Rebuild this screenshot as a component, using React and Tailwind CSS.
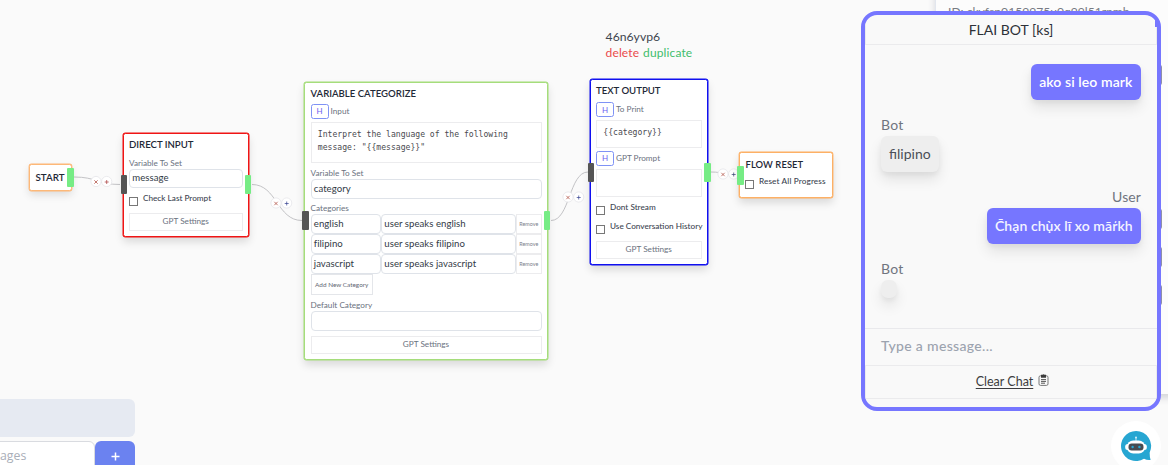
import React from 'react';

const Title = ({ children }) => (
  <div className="flex h-[21px] shrink-0 items-center pt-[2px] text-[9.6px] font-semibold text-[#1f2937]">{children}</div>
);

const Label = ({ children, className = 'h-4' }) => (
  <div className={`flex shrink-0 items-end text-[8.2px] leading-[12px] text-[#6b7280] ${className}`}>{children}</div>
);

const Field = ({ children, className = 'h-[19.5px]' }) => (
  <div className={`flex shrink-0 items-center rounded-[4px] border border-[#dfe3e9] bg-white px-[2.3px] text-[9.6px] leading-none tracking-[0.04px] text-[#323a46] ${className}`}>
    {children}
  </div>
);

const Prompt = ({ children, className }) => (
  <div className={`shrink-0 border border-[#ececee] bg-white px-[6.3px] pt-[5.5px] font-['DejaVu_Sans_Mono',monospace] text-[8.1px] leading-[12.6px] text-[#4a4a50] ${className}`}>
    {children}
  </div>
);

const HRow = ({ children, className = '' }) => (
  <div className={`flex h-[15px] shrink-0 items-center gap-[2px] text-[8.2px] text-[#6b7280] ${className}`}>
    <span className="flex h-[15px] w-[18px] items-center justify-center rounded-[2.5px] border border-[#7f92f5] bg-white text-[8px] text-[#6d5ff0]">H</span>
    {children}
  </div>
);

const Check = ({ children, className = '' }) => (
  <div className={`flex shrink-0 items-start gap-[5px] ${className}`}>
    <span className="mt-[3px] size-[9px] shrink-0 border border-[#777] bg-white" />
    <span className="whitespace-nowrap text-[8.2px] font-medium leading-[9px] text-[#3c4450]">{children}</span>
  </div>
);

const Settings = ({ className = '' }) => (
  <div className={`flex h-[17.5px] shrink-0 items-center justify-center border border-[#ececee] bg-white pb-[1px] text-[8.2px] text-[#6b7280] ${className}`}>
    GPT Settings
  </div>
);

const Node = ({ className, children }) => (
  <div className={`absolute flex flex-col rounded-[2.5px] border bg-white px-[5.5px] ${className}`}>{children}</div>
);

const Handle = ({ className }) => <div className={`absolute h-[19px] w-[6.5px] rounded-[1px] ${className}`} />;

const categories = [
  ['english', 'user speaks english'],
  ['filipino', 'user speaks filipino'],
  ['javascript', 'user speaks javascript'],
];

const edges = [
  { d: 'M74 177 C97 177 97 184.5 120 184.5', x: 96, y: 181.5, plus: '#a83a3a' },
  { d: 'M252 184.5 C277 184.5 277 220.5 302 220.5', x: 276, y: 203, plus: '#33418f' },
  { d: 'M551 220.5 C570 220.5 569 172 588 172', x: 568, y: 197, plus: '#33418f' },
  { d: 'M711 172 C724 172 724 175 737 175', x: 723, y: 174, plus: '#333f70' },
];

const Edges = () => (
  <svg className="absolute inset-0" width="1168" height="465" fill="none">
    {edges.map((e) => (
      <g key={e.d}>
        <path d={e.d} stroke="#c3c3c6" strokeWidth="1" />
        {[0, 10.7].map((o) => (
          <circle key={o} cx={e.x + o} cy={e.y} r="5.1" fill="#fff" stroke="#e6e6ea" strokeWidth=".8" />
        ))}
        <path d={`M${e.x - 1.7} ${e.y - 1.2}l3.4 3.4m0 -3.4l-3.4 3.4`} stroke="#b4584c" strokeWidth=".8" />
        <path d={`M${e.x + 8.7} ${e.y + 0.5}h4m-2 -2v4`} stroke={e.plus} strokeWidth=".7" />
      </g>
    ))}
  </svg>
);

const Canvas = () => (
  <>
    <Edges />
    <Node className="left-[29px] top-[164px] h-[26.5px] w-[42.5px] border-[#fdb878] shadow-[0_0_0_0.4px_#fdb878,0_4px_8px_rgba(0,0,0,0.12)]">
      <div className="flex h-full items-center text-[9.8px] font-semibold text-[#1f2937]">START</div>
    </Node>

    <Node className="left-[122.5px] top-[132.5px] h-[104.5px] w-[126.5px] border-[#f01414] shadow-[0_0_0_0.5px_#f01414,0_5px_9px_rgba(0,0,0,0.13)]">
      <Title>DIRECT INPUT</Title>
      <Label className="h-[14px]">Variable To Set</Label>
      <Field>message</Field>
      <Check className="mt-[5.5px] h-[13px]">Check Last Prompt</Check>
      <Settings className="mt-[6.5px]" />
    </Node>

    <Node className="left-[304px] top-[81.5px] h-[278px] w-[244px] border-[#a5dd7b] shadow-[0_0_0_0.5px_#a5dd7b,0_5px_9px_rgba(0,0,0,0.13)]">
      <Title>VARIABLE CATEGORIZE</Title>
      <HRow>Input</HRow>
      <Prompt className="mt-[3px] h-[41.5px]">
        Interpret the language of the following
        <br />
        message: "{'{{message}}'}"
      </Prompt>
      <Label className="h-[16px]">Variable To Set</Label>
      <Field>category</Field>
      <Label className="h-[15.5px] leading-[9px]">Categories</Label>
      {categories.map(([name, rule]) => (
        <div key={name} className="flex h-[20px] shrink-0">
          <Field className="h-[20px] w-[70.5px]">{name}</Field>
          <Field className="h-[20px] w-[135px]">{rule}</Field>
          <div className="flex h-[20px] flex-1 items-center justify-center border border-[#ececee] text-[5.4px] text-[#7b818c]">Remove</div>
        </div>
      ))}
      <div className="flex h-[21px] w-[62.5px] shrink-0 items-center justify-center border border-[#e4e6ea] text-[6.4px] text-[#5f6773]">
        Add New Category
      </div>
      <Label className="h-[16px] leading-[11px]">Default Category</Label>
      <Field />
      <Settings className="mt-[5.5px]" />
    </Node>

    <Node className="left-[589.5px] top-[79px] h-[186px] w-[118.5px] border-[#1010f0] shadow-[0_0_0_0.5px_#1010f0,0_5px_9px_rgba(0,0,0,0.13)]">
      <Title>TEXT OUTPUT</Title>
      <HRow className="mt-[1px]">To Print</HRow>
      <Prompt className="mt-[2.5px] h-[28px]">{'{{category}}'}</Prompt>
      <HRow className="mt-[3px]">GPT Prompt</HRow>
      <Prompt className="mt-[3px] h-[28px]" />
      <Check className="mt-[6px] h-[13px]">Dont Stream</Check>
      <Check className="mt-[6px] h-[13px]">Use Conversation History</Check>
      <Settings className="mt-[6.5px]" />
    </Node>

    <Node className="left-[739px] top-[152px] h-[46px] w-[94px] border-[#fdb065] shadow-[0_0_0_0.4px_#fdb065,0_5px_9px_rgba(0,0,0,0.13)]">
      <Title>
        <span className="pt-[1px] text-[9.4px] tracking-[0.1px]">FLOW RESET</span>
      </Title>
      <Check className="-ml-[0.6px] mt-[3px]">
        <span className="tracking-[0.14px]">Reset All Progress</span>
      </Check>
    </Node>

    <Handle className="left-[67px] top-[168px] bg-[#76ec85]" />
    <Handle className="left-[120.5px] top-[175px] bg-[#555]" />
    <Handle className="left-[244.5px] top-[175px] bg-[#76ec85]" />
    <Handle className="left-[302px] top-[211px] bg-[#555]" />
    <Handle className="left-[543.5px] top-[211px] bg-[#76ec85]" />
    <Handle className="left-[587.5px] top-[162.5px] bg-[#555]" />
    <Handle className="left-[704px] top-[162.5px] bg-[#76ec85]" />
    <Handle className="left-[737px] top-[165.5px] bg-[#76ec85]" />

    <div className="absolute left-[605.6px] top-[29px] text-[12.2px] leading-4 text-[#3f4650]">
      <div>46n6yvp6</div>
      <div className="flex gap-[4px] text-[12px] tracking-[0.12px]">
        <span className="text-[#ea4a4a]">delete</span>
        <span className="text-[#41bd6c]">duplicate</span>
      </div>
    </div>
  </>
);

const bubbleShadow = 'shadow-[0_8px_14px_rgba(0,0,0,0.09),0_3px_5px_rgba(0,0,0,0.05)]';

const Chat = () => (
  <div className="absolute left-[861px] top-[11px] flex h-[400px] w-[300px] flex-col overflow-hidden rounded-[16px] border-4 border-[#7676ff] bg-[#f9f9f9] text-[14px]">
    <div className="flex h-[30px] shrink-0 items-center justify-center border border-t-0 border-[#ebebed] pb-[1px] text-[#2d3138]">FLAI BOT [ks]</div>
    <div className="flex h-[283px] shrink-0 flex-col px-4 pt-[19px]">
      <div className={`flex h-[36px] items-center self-end rounded-[6px] bg-[#7676ff] px-[8.5px] pb-[2px] font-semibold text-white ${bubbleShadow}`}>
        <span className="tracking-[0.09px]">ako si leo mark</span>
      </div>
      <div className="mt-[15px] h-[21px] leading-5 tracking-[0.2px] text-[#70757f]">Bot</div>
      <div className={`flex h-[36px] w-[58px] items-center self-start rounded-[6px] bg-[#eeeeee] px-[8px] pb-[2px] text-[#4a4f57] ${bubbleShadow}`}>filipino</div>
      <div className="mt-[15px] h-[21px] self-end leading-5 tracking-[0.1px] text-[#70757f]">User</div>
      <div className={`flex h-[36px] w-[154px] items-center self-end rounded-[6px] bg-[#7676ff] px-[8px] pb-[1px] font-semibold text-[#f4f4ff] ${bubbleShadow}`}>
        <span className="whitespace-nowrap tracking-[0.07px]">C̄hạn chụ̀x lī xo mār̒kh</span>
      </div>
      <div className="mt-[15px] h-[21px] leading-5 tracking-[0.2px] text-[#70757f]">Bot</div>
      <div className={`h-[18px] w-4 self-start rounded-[7px] bg-[#eeeeee] ${bubbleShadow}`} />
    </div>
    <div className="flex h-[37px] shrink-0 items-center border-t border-[#e9e9ec] px-4 pb-[3px] font-medium tracking-[0.33px] text-[#9ca3af]">Type a message...</div>
    <div className="flex h-[34px] shrink-0 items-center justify-center gap-[5px] border border-[#ebebed] pl-[3px] text-[12.5px] text-[#3d3d40]">
      <span className="underline underline-offset-[1.5px]">Clear Chat</span>
      <svg className="-mt-[4px]" width="11" height="12" viewBox="0 0 11 12" fill="none">
        <rect x="1" y="1.8" width="9" height="9.6" rx="1.5" stroke="#777" strokeWidth="1" />
        <path d="M3 .8h1.4q1.1-1 2.2 0H8v3H3z" fill="#3c3c3c" />
        <path d="M3 5.6h5M3 7.4h5M3 9.2h4" stroke="#444" strokeWidth=".9" />
      </svg>
    </div>
  </div>
);

export default function App() {
  return (
    <main className="relative h-[465px] w-[1168px] overflow-hidden bg-[#fafafa] font-['Lato',sans-serif]">
      <Canvas />

      <aside className="absolute -top-4 left-[935px] h-[410px] w-[260px] border-l border-[#e2e6ee] bg-[#fcfcfc] pl-[12px] pt-[19px] shadow-[0_4px_7px_rgba(60,70,90,0.2)]">
        <div className="text-[12.1px] leading-[18px] text-[#777b83]">ID: ckvfsp0159975u0q99l51rpmb</div>
      </aside>
      <div className="absolute left-[1157px] top-[65px] flex w-[5px] flex-col">
        <span className="h-5 rounded-r-[2px] bg-[#8f8fa8]" />
        <span className="mt-[124px] h-5 rounded-r-[2px] bg-[#8f8fa8]" />
        <span className="mt-[18px] h-5 rounded-r-[2px] bg-[#8f8fa8]" />
        <span className="mt-[18px] h-5 rounded-r-[2px] bg-[#8f8fa8]" />
      </div>
      <Chat />
      <span className="absolute left-[1155px] top-[20px] h-[7px] w-[2px] bg-[#7676ff]" />

      <div className="absolute left-[1111px] top-[421px] flex size-[50px] items-center justify-center rounded-full bg-white">
        <svg width="32" height="32" viewBox="0 0 32 32">
          <path d="M16 1a15 15 0 1 0 8 27.7q3 1.8 6.6 1.3-1-2.5-.9-7.6A15 15 0 0 0 16 1z" fill="#27a6d2" />
          <circle cx="16" cy="7.6" r="1" fill="#d9f1fa" />
          <path d="M15.6 8h.8v3h-.8z" fill="#d9f1fa" />
          <rect x="5.2" y="14" width="21.6" height="6" rx="2.5" fill="#fff" />
          <rect x="7" y="10.5" width="18" height="13" rx="6.2" fill="#fff" />
          <rect x="8.5" y="13.5" width="15" height="7" rx="3.2" fill="#474b50" />
          <circle cx="12.6" cy="17" r="1.2" fill="#27a6d2" />
          <circle cx="19.4" cy="17" r="1.2" fill="#27a6d2" />
        </svg>
      </div>

      <div className="absolute -left-4 top-[399px] flex w-[151px] flex-col gap-1">
        <div className="h-[38px] rounded-[6px] bg-[#e6eaf2]" />
        <div className="flex h-10">
          <div className="flex h-10 flex-1 rounded-tr-[6px] border border-[#d9dbe0] bg-white pl-[15px] pt-[4px] font-['Open_Sans',sans-serif] text-[12.3px] leading-[20px] text-[#a9aeb8]">ages</div>
          <div className="flex h-10 w-10 justify-center rounded-t-[6px] bg-[#6b82f0] pt-[10.5px]">
            <svg width="9" height="9" viewBox="0 0 9 9" stroke="#fff" strokeWidth="1.5">
              <path d="M.5 4.5h8M4.5 .5v8" />
            </svg>
          </div>
        </div>
      </div>
    </main>
  );
}
